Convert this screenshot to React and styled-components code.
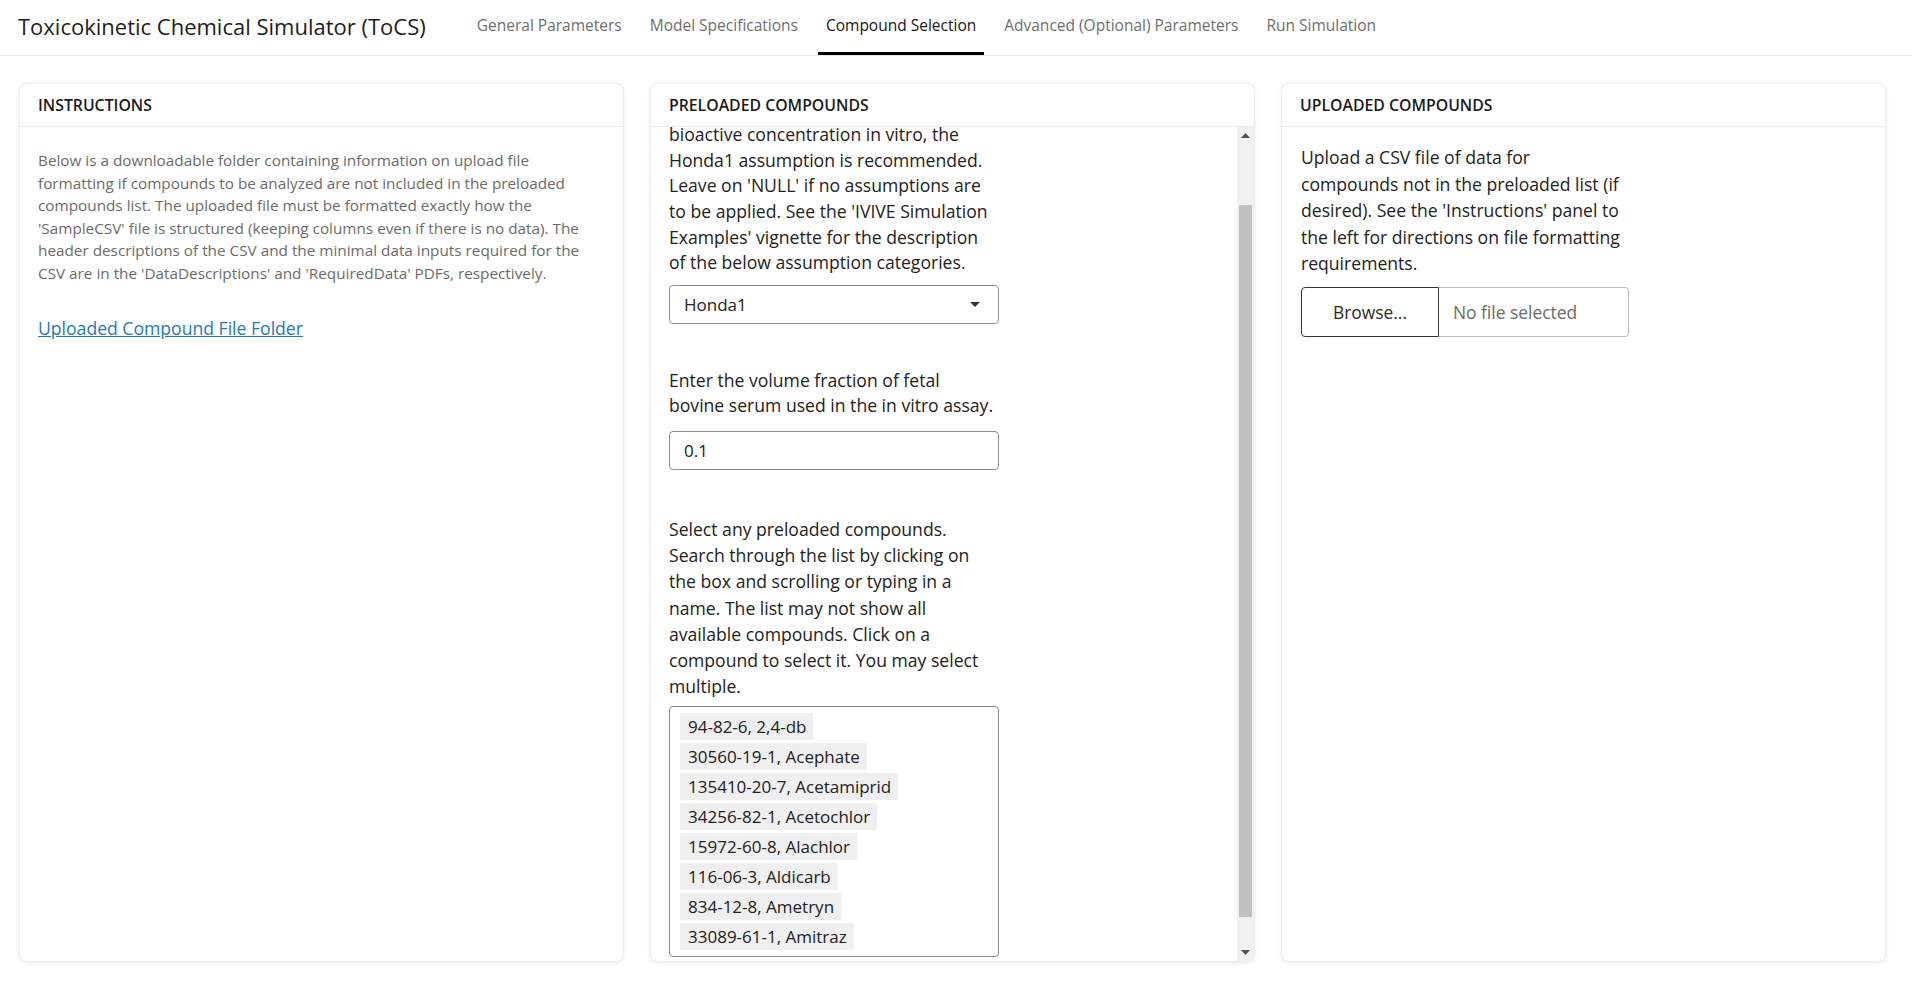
import React, { useLayoutEffect, useRef, useState } from 'react';
import styled, { createGlobalStyle } from 'styled-components';

const GlobalStyle = createGlobalStyle`
  html, body {
    margin: 0;
    padding: 0;
    background: #fff;
  }
  body {
    font-family: "Open Sans", "Liberation Sans", sans-serif;
    color: #212529;
  }
  * { box-sizing: border-box; }
`;

const Navbar = styled.nav`
  height: 56px;
  display: flex;
  align-items: stretch;
  padding-left: 18px;
  border-bottom: 1px solid #e6e6e6;
`;

const Brand = styled.div`
  display: flex;
  align-items: center;
  padding-bottom: 4px;
  font-size: 22px;
  color: #1d1d1d;
  margin-right: 43px;
  white-space: nowrap;
`;

const Tabs = styled.div`
  display: flex;
  gap: 12px;
`;

const Tab = styled.a`
  display: flex;
  align-items: center;
  padding: 0 8px 3px;
  font-size: 15.5px;
  color: ${p => (p.$active ? '#161616' : '#6e6e6e')};
  border-bottom: 3px solid ${p => (p.$active ? '#000' : 'transparent')};
  text-decoration: none;
  white-space: nowrap;
  cursor: pointer;
`;

const Main = styled.main`
  height: calc(100vh - 56px);
  padding: 27px 26px 23px 19px;
  display: grid;
  grid-template-columns: repeat(3, 1fr);
  gap: 26px;
`;

const Card = styled.section`
  position: relative;
  display: flex;
  flex-direction: column;
  min-height: 0;
  background: #fff;
  border: 1px solid rgba(0, 0, 0, 0.07);
  border-radius: 8px;
  box-shadow: 0 1px 4px rgba(0, 0, 0, 0.09);
  overflow: hidden;
`;

const CardHeader = styled.header`
  flex: none;
  height: 43px;
  display: flex;
  align-items: center;
  padding: 0 18px;
  border-bottom: 1px solid #ececec;
  font-size: 15.8px;
  font-weight: 600;
  color: #1b1b1b;
`;

const CardBody = styled.div`
  flex: 1;
  min-height: 0;
  padding: ${p => p.$pad || '16px 18px'};
  overflow-y: ${p => (p.$scroll ? 'scroll' : 'visible')};
  scrollbar-width: none;
  &::-webkit-scrollbar { display: none; }
`;

const ScrollRail = styled.div`
  position: absolute;
  top: 43px;
  right: 0;
  bottom: 0;
  width: 17px;
  display: flex;
  flex-direction: column;
  background: #f1f1f1;
`;

const ScrollButton = styled.div`
  flex: none;
  height: 17px;
  display: flex;
  align-items: center;
  justify-content: center;
`;

const ScrollTrack = styled.div`
  position: relative;
  flex: 1;
`;

const ScrollThumb = styled.div`
  position: absolute;
  left: 2px;
  right: 2px;
  background: #c1c1c1;
`;

const Muted = styled.p`
  margin: 0 0 31px;
  font-size: 15.3px;
  line-height: 22.6px;
  color: #6b6b6b;
  white-space: nowrap;
`;

const FileLink = styled.a`
  font-size: 17.6px;
  line-height: 25px;
  color: #1f78c1;
  text-decoration: underline;
`;

const Group = styled.div`
  width: 330px;
  margin-bottom: ${p => p.$mb || '44px'};
`;

const Label = styled.div`
  font-size: 17.6px;
  line-height: ${p => p.$lh || '25.6px'};
  color: #222;
  white-space: nowrap;
  margin-bottom: ${p => p.$mb || '10px'};
`;

const Select = styled.div`
  height: 39px;
  display: flex;
  align-items: center;
  justify-content: space-between;
  padding: 0 18px 0 14px;
  border: 1px solid #8f8f8f;
  border-radius: 4px;
  font-size: 17px;
  color: #222;
`;

const Caret = styled.span`
  width: 0;
  height: 0;
  border-left: 5px solid transparent;
  border-right: 5px solid transparent;
  border-top: 5px solid #333;
`;

const TextInput = styled.div`
  height: 39px;
  display: flex;
  align-items: center;
  padding: 0 14px;
  border: 1px solid #8f8f8f;
  border-radius: 4px;
  font-size: 17px;
  color: #222;
`;

const MultiBox = styled.div`
  padding: 6px 10px;
  border: 1px solid #8a8a8a;
  border-radius: 4px;
`;

const Chip = styled.div`
  width: fit-content;
  height: 27px;
  line-height: 27px;
  padding: 0 7px 0 8px;
  margin-bottom: 3px;
  background: #efefef;
  font-size: 17px;
  color: #222;

  &:last-child { margin-bottom: 0; }
`;

const FileRow = styled.div`
  display: flex;
  width: 328px;
  height: 50px;
  font-size: 17.4px;
`;

const BrowseButton = styled.div`
  width: 138px;
  display: flex;
  align-items: center;
  justify-content: center;
  border: 1px solid #333;
  border-radius: 4px 0 0 4px;
  color: #2b2b2b;
`;

const FileName = styled.div`
  flex: 1;
  display: flex;
  align-items: center;
  padding: 0 14px;
  border: 1px solid #bdbdbd;
  border-left: none;
  border-radius: 0 4px 4px 0;
  color: #6a6a6a;
`;

const Arrow = ({ up }) => (
  <svg width="9" height="5" viewBox="0 0 9 5">
    <path d={up ? 'M0 5 L4.5 0 L9 5 Z' : 'M0 0 L4.5 5 L9 0 Z'} fill="#505050" />
  </svg>
);

const Lines = ({ lines }) =>
  lines.map((l, i) => (
    <React.Fragment key={i}>
      {l}
      {i < lines.length - 1 && <br />}
    </React.Fragment>
  ));

const tabs = [
  'General Parameters',
  'Model Specifications',
  'Compound Selection',
  'Advanced (Optional) Parameters',
  'Run Simulation',
];

const compounds = [
  '94-82-6, 2,4-db',
  '30560-19-1, Acephate',
  '135410-20-7, Acetamiprid',
  '34256-82-1, Acetochlor',
  '15972-60-8, Alachlor',
  '116-06-3, Aldicarb',
  '834-12-8, Ametryn',
  '33089-61-1, Amitraz',
];

const instructions = [
  'Below is a downloadable folder containing information on upload file',
  'formatting if compounds to be analyzed are not included in the preloaded',
  'compounds list. The uploaded file must be formatted exactly how the',
  "'SampleCSV' file is structured (keeping columns even if there is no data). The",
  'header descriptions of the CSV and the minimal data inputs required for the',
  "CSV are in the 'DataDescriptions' and 'RequiredData' PDFs, respectively.",
];

const uploadText = [
  'Upload a CSV file of data for',
  'compounds not in the preloaded list (if',
  "desired). See the 'Instructions' panel to",
  'the left for directions on file formatting',
  'requirements.',
];

const App = () => {
  const bodyRef = useRef(null);
  const markRef = useRef(null);
  const [thumb, setThumb] = useState({ top: 0, height: 0 });

  // scroll the preloaded panel so the "bioactive" line sits just under the header,
  // then size the drawn scrollbar thumb from the real scroll metrics
  useLayoutEffect(() => {
    const body = bodyRef.current;
    const mark = markRef.current;
    if (!body || !mark) return;
    const b = body.getBoundingClientRect();
    const m = mark.getBoundingClientRect();
    body.scrollTop = body.scrollTop + (m.top + m.height / 2 - b.top) - 7;
    const track = body.clientHeight - 34;
    setThumb({
      top: (track * body.scrollTop) / body.scrollHeight,
      height: (track * body.clientHeight) / body.scrollHeight,
    });
  }, []);

  return (
    <>
      <GlobalStyle />
      <Navbar>
        <Brand>Toxicokinetic Chemical Simulator (ToCS)</Brand>
        <Tabs>
          {tabs.map(t => (
            <Tab key={t} $active={t === 'Compound Selection'}>{t}</Tab>
          ))}
        </Tabs>
      </Navbar>

      <Main>
        <Card>
          <CardHeader>INSTRUCTIONS</CardHeader>
          <CardBody $pad="22px 18px">
            <Muted>
              <Lines lines={instructions} />
            </Muted>
            <FileLink href="#">Uploaded Compound File Folder</FileLink>
          </CardBody>
        </Card>

        <Card>
          <CardHeader>PRELOADED COMPOUNDS</CardHeader>
          <CardBody $scroll ref={bodyRef} $pad="16px 18px">
            <Group>
              <Label $mb="9px">
                Select the in vitro distribution<br />
                assumption. When calculating the<br />
                <span ref={markRef}>bioactive</span> concentration in vitro, the<br />
                Honda1 assumption is recommended.<br />
                Leave on 'NULL' if no assumptions are<br />
                to be applied. See the 'IVIVE Simulation<br />
                Examples' vignette for the description<br />
                of the below assumption categories.
              </Label>
              <Select>
                Honda1
                <Caret />
              </Select>
            </Group>
            <Group $mb="46px">
              <Label $mb="12px">
                Enter the volume fraction of fetal<br />
                bovine serum used in the in vitro assay.
              </Label>
              <TextInput>0.1</TextInput>
            </Group>
            <Group $mb="20px">
              <Label $lh="26.2px" $mb="7px">
                Select any preloaded compounds.<br />
                Search through the list by clicking on<br />
                the box and scrolling or typing in a<br />
                name. The list may not show all<br />
                available compounds. Click on a<br />
                compound to select it. You may select<br />
                multiple.
              </Label>
              <MultiBox>
                {compounds.map(c => (
                  <Chip key={c}>{c}</Chip>
                ))}
              </MultiBox>
            </Group>
          </CardBody>
          <ScrollRail>
            <ScrollButton><Arrow up /></ScrollButton>
            <ScrollTrack>
              <ScrollThumb style={{ top: thumb.top, height: thumb.height }} />
            </ScrollTrack>
            <ScrollButton><Arrow /></ScrollButton>
          </ScrollRail>
        </Card>

        <Card>
          <CardHeader>UPLOADED COMPOUNDS</CardHeader>
          <CardBody $pad="17px 19px">
            <Group>
              <Label $lh="26.5px" $mb="10px">
                <Lines lines={uploadText} />
              </Label>
              <FileRow>
                <BrowseButton>Browse...</BrowseButton>
                <FileName>No file selected</FileName>
              </FileRow>
            </Group>
          </CardBody>
        </Card>
      </Main>
    </>
  );
};

export default App;
